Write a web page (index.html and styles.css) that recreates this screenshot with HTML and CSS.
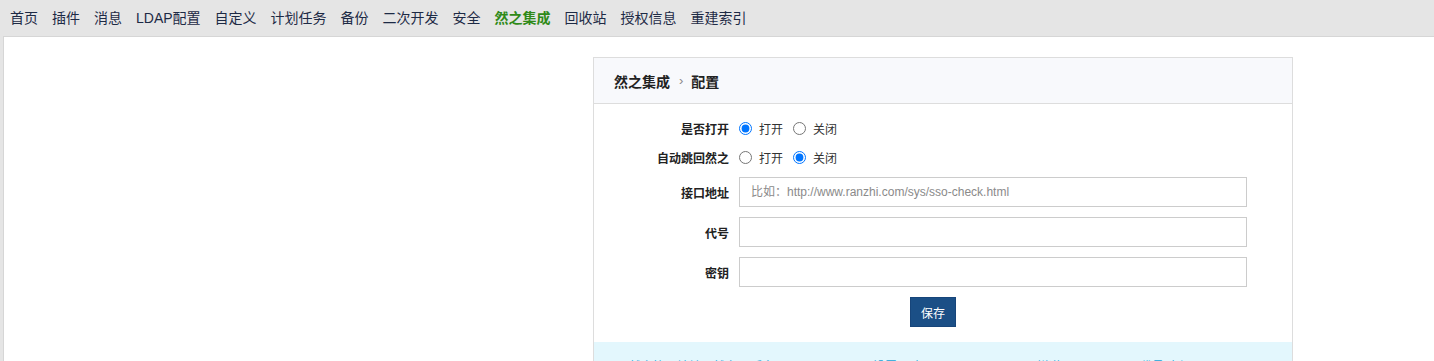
FILE: index.html
```html
<!DOCTYPE html>
<html lang="zh-CN">
<head>
    <meta charset="UTF-8">
    <title>然之集成 - 配置</title>
    <link rel="stylesheet" href="styles.css">
</head>
<body>
    <nav class="topnav">
        <a href="#">首页</a>
        <a href="#">插件</a>
        <a href="#">消息</a>
        <a href="#">LDAP配置</a>
        <a href="#">自定义</a>
        <a href="#">计划任务</a>
        <a href="#">备份</a>
        <a href="#">二次开发</a>
        <a href="#">安全</a>
        <a href="#" class="active">然之集成</a>
        <a href="#">回收站</a>
        <a href="#">授权信息</a>
        <a href="#">重建索引</a>
    </nav>

    <div class="main">
        <div class="panel">
            <div class="panel-heading">
                <strong>然之集成</strong>
                <span class="divider">›</span>
                <strong>配置</strong>
            </div>
            <form class="panel-body">
                <div class="row radio-row">
                    <label class="row-label">是否打开</label>
                    <div class="row-field">
                        <label class="radio"><input type="radio" name="turnon" checked>打开</label>
                        <label class="radio"><input type="radio" name="turnon">关闭</label>
                    </div>
                </div>
                <div class="row radio-row">
                    <label class="row-label">自动跳回然之</label>
                    <div class="row-field">
                        <label class="radio"><input type="radio" name="redirect">打开</label>
                        <label class="radio"><input type="radio" name="redirect" checked>关闭</label>
                    </div>
                </div>
                <div class="row first-input">
                    <label class="row-label">接口地址</label>
                    <div class="row-field"><input type="text" class="form-control" placeholder="比如：http://www.ranzhi.com/sys/sso-check.html"></div>
                </div>
                <div class="row">
                    <label class="row-label">代号</label>
                    <div class="row-field"><input type="text" class="form-control"></div>
                </div>
                <div class="row">
                    <label class="row-label">密钥</label>
                    <div class="row-field"><input type="text" class="form-control"></div>
                </div>
                <div class="actions">
                    <button type="submit" class="btn-save">保存</button>
                </div>
            </form>
            <div class="panel-help">
                <span class="help-1">然之协同地址：然之 &gt; 后台</span>
                <span class="help-2">设置 &gt; 应用</span>
                <span class="help-3">禅道</span>
                <span class="help-4">代号 密钥</span>
            </div>
        </div>
    </div>
</body>
</html>
```

FILE: styles.css
```css
/* Common styles */
body {
    margin: 0;
    font-family: "Liberation Sans", "Noto Sans CJK SC", sans-serif;
    font-size: 12px;
    color: #333;
    background-color: #e5e5e5;
}

.topnav {
    height: 36px;
    display: flex;
    align-items: center;
    padding-left: 10px;
    gap: 14px;
    font-size: 14px;
}

.topnav a {
    color: #1d2a45;
    text-decoration: none;
    line-height: 20px;
}

.topnav a.active {
    color: #2f8a18;
    font-weight: bold;
}

.main {
    margin-left: 3px;
    background-color: #fff;
    border-top: 1px solid #d6d6d6;
    border-left: 1px solid #d6d6d6;
    padding: 20px 0 0 589px;
    height: 400px;
}

/* Panel */
.panel {
    width: 698px;
    border: 1px solid #ddd;
    background-color: #fff;
}

.panel-heading {
    height: 45px;
    display: flex;
    align-items: center;
    padding-left: 20px;
    background-color: #f8f9fc;
    border-bottom: 1px solid #ddd;
    color: #222;
    font-size: 14px;
}

.panel-heading .divider {
    color: #888;
    font-size: 13px;
    margin: 0 8px 0 9px;
}

.panel-body {
    padding: 12px 0 15px;
}

.row {
    display: flex;
    align-items: center;
    margin-bottom: 10px;
}

.radio-row {
    margin-bottom: 5px;
    height: 24px;
}

.first-input {
    margin-top: 8px;
}

.row-label {
    width: 145px;
    padding-right: 10px;
    box-sizing: border-box;
    text-align: right;
    font-weight: bold;
    color: #222;
}

.row-field {
    width: 508px;
    display: flex;
    align-items: center;
}

.radio {
    display: flex;
    align-items: center;
    margin-right: 10px;
    color: #333;
}

.radio input {
    margin: 0 7px 0 0;
    width: 13px;
    height: 13px;
}

.form-control {
    width: 100%;
    height: 30px;
    box-sizing: border-box;
    border: 1px solid #ccc;
    padding: 0 11px;
    font-family: "Liberation Sans", "Noto Sans CJK SC", sans-serif;
    font-size: 12px;
}

.form-control::placeholder {
    color: #8a8a8a;
}

.actions {
    padding-left: 316px;
    margin-top: 10px;
}

.btn-save {
    width: 46px;
    height: 30px;
    border: 1px solid #17457a;
    background-color: #1b4f86;
    color: #fff;
    font-family: "Liberation Sans", "Noto Sans CJK SC", sans-serif;
    font-size: 12px;
    padding: 0;
}

.panel-help {
    background-color: #e3f7fd;
    padding: 15px 0 12px 35px;
    display: flex;
    color: #1aa3d6;
}

.help-1 {
    width: 244px;
}

.help-2 {
    width: 164px;
}

.help-3 {
    width: 103px;
}
```
